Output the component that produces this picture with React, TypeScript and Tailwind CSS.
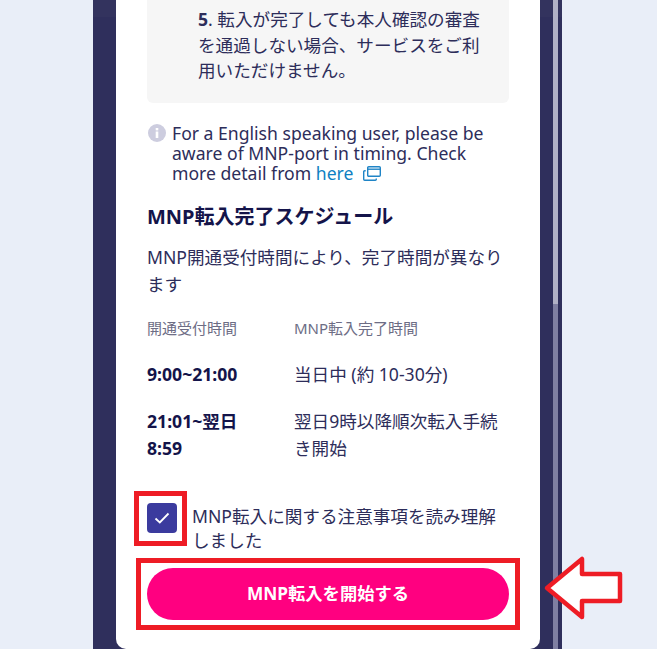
export default function App() {
  return (
    <div
      className="relative flex h-[649px] w-[657px] justify-center overflow-hidden bg-[#e9eef8] pl-[93px] pr-[95px] text-[#2d2d5a]"
      style={{ fontFamily: '"Noto Sans", "Noto Sans CJK JP", sans-serif' }}
    >
      <div className="flex h-full w-[469px] bg-[linear-gradient(#33335e_17px,#2f2f5c_17px)]">
        <div className="ml-[23px] h-[649px] w-[424px] rounded-b-[10px] bg-white px-[31px]">
          <div className="h-[103px] rounded-b-[6px] bg-[#f6f6f6] pl-[51px] pr-[20px] pt-[7px] text-[17.6px]">
            <p className="m-0 leading-[25.5px]">
              <b>5</b>. 転入が完了しても本人確認の審査を通過しない場合、サービスをご利用いただけません。
            </p>
          </div>
          <div className="mt-[20px] flex gap-[6px] pl-[1px]">
            <svg width="18" height="18" viewBox="0 0 18 18" className="mt-[1px] shrink-0">
              <circle cx="9" cy="9" r="9" fill="#cdcddf" />
              <rect x="7.7" y="7.5" width="2.6" height="6.5" fill="#fff" />
              <rect x="7.7" y="4" width="2.6" height="2.4" fill="#fff" />
            </svg>
            <p className="m-0 text-[17.6px] leading-[20px]">
              For a English speaking user, please be aware of MNP-port in timing. Check more detail from{" "}
              <span className="text-[#0f7fc2]">here</span>
              <svg width="18" height="15" viewBox="0 0 18 15" fill="none" stroke="#1f84c6" strokeWidth="1.4" className="ml-[10px] inline-block align-[-1px]">
                <rect x="4.7" y="0.7" width="12.6" height="9.6" rx="1" />
                <path d="M4.7 3.2H17.3" />
                <path d="M2.7 4.7H1.7a1 1 0 0 0-1 1v7.6a1 1 0 0 0 1 1h10.6a1 1 0 0 0 1-1v-.8" />
              </svg>
            </p>
          </div>
          <h2 className="m-0 mt-[20px] text-[20px] font-bold leading-[28px] text-[#14144a]">MNP転入完了スケジュール</h2>
          <p className="m-0 mt-[13px] text-[17.6px] leading-[27px]">MNP開通受付時間により、完了時間が異なります</p>
          <div className="mt-[20px] flex text-[15px] leading-[20px] text-[#6d6d85]">
            <div className="w-[147px]">開通受付時間</div>
            <div>MNP転入完了時間</div>
          </div>
          <div className="mt-[23px] flex text-[17.6px] leading-[27px]">
            <div className="w-[147px] font-bold text-[#14144a]">9:00~21:00</div>
            <div className="flex-1">当日中 (約 10-30分)</div>
          </div>
          <div className="mt-[20px] flex text-[17.6px] leading-[27px]">
            <div className="w-[147px] pr-[40px] font-bold text-[#14144a]">21:01~翌日8:59</div>
            <div className="flex-1">翌日9時以降順次転入手続き開始</div>
          </div>
          <div className="mt-[41px] flex gap-[15px] pr-[6px]">
            <div className="flex h-[30px] w-[30px] shrink-0 items-center justify-center rounded-[4px] bg-[#3b3b9e]">
              <svg width="16" height="12" viewBox="0 0 16 12" fill="none" stroke="#fff" strokeWidth="1.8">
                <path d="M1.5 6.5 5.8 10.5 14.5 1.5" />
              </svg>
            </div>
            <p className="m-0 pt-[1px] text-[17.6px] leading-[24px]">MNP転入に関する注意事項を読み理解しました</p>
          </div>
          <button className="mt-[16px] flex h-[52px] w-[362px] items-center justify-center rounded-full bg-[#ff0080] text-[17.3px] font-bold text-white">
            MNP転入を開始する
          </button>
        </div>
        <div className="relative ml-[13px] h-full w-[5px] bg-[#b1b1c6]">
          <div className="absolute bottom-0 left-0 top-[304px] w-full bg-[#7f7fa2]" />
        </div>
      </div>

      <div className="absolute left-[134px] top-[491px] h-[55px] w-[53px] border-[5px] border-[#ee1c25]" />
      <div className="absolute left-[136px] top-[558px] h-[72px] w-[384px] border-[5px] border-[#ee1c25]" />
      <svg width="82" height="70" viewBox="0 0 82 70" className="absolute left-[543px] top-[555px]">
        <path d="M4 33 39 4V19H77V46H39V62Z" fill="#fff" stroke="#ee1c25" strokeWidth="4.5" strokeLinejoin="round" />
      </svg>
    </div>
  );
}
